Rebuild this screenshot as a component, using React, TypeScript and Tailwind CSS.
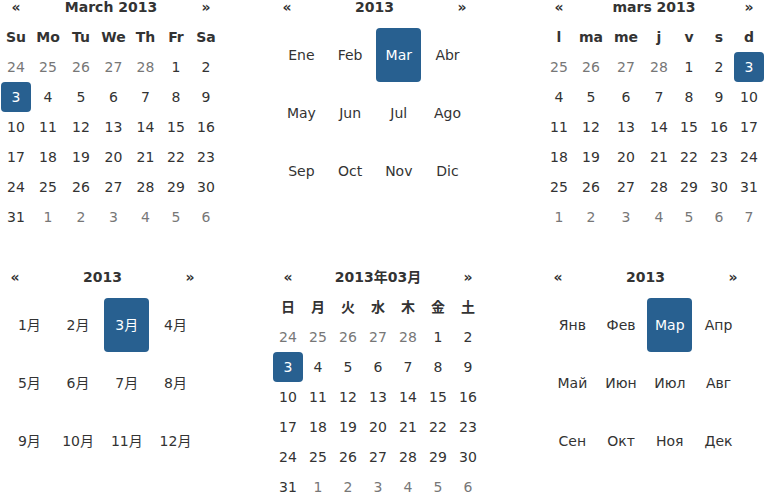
import React from 'react'

type Day = {
    n: number
    muted?: boolean
    active?: boolean
}

type DayViewProps = {
    title: string
    dow: string[]
    days: Day[]
    cols: string
}

type MonthViewProps = {
    months: string[]
    active: number
}

function buildDays(before: number[], count: number, after: number[], activeDay: number): Day[] {
    const out: Day[] = []
    before.forEach((n) => out.push({ n, muted: true }))
    for (let i = 1; i <= count; i++) out.push({ n: i, active: i === activeDay })
    after.forEach((n) => out.push({ n, muted: true }))
    return out
}

function DayView(props: DayViewProps) {
    return (
        <div className={`grid w-max auto-rows-[30px] ${props.cols}`}>
            <div className="flex items-center justify-center font-bold">«</div>
            <div className="col-span-5 flex items-center justify-center font-bold">{props.title}</div>
            <div className="flex items-center justify-center font-bold">»</div>
            {props.dow.map((d) => (
                <div key={d} className="flex items-center justify-center font-bold">
                    {d}
                </div>
            ))}
            {props.days.map((d, i) => (
                <div
                    key={i}
                    className={
                        'flex items-center justify-center rounded-[4px] ' +
                        (d.active ? 'bg-[#286090] text-white' : d.muted ? 'text-[#777]' : '')
                    }
                >
                    {d.n}
                </div>
            ))}
        </div>
    )
}

function MonthView(props: MonthViewProps) {
    return (
        <div className="w-[205px]">
            <div className="grid h-[30px] grid-cols-[30px_1fr_30px] font-bold">
                <div className="flex items-center justify-center">«</div>
                <div className="flex items-center justify-center">2013</div>
                <div className="flex items-center justify-center">»</div>
            </div>
            <div className="px-[5px] py-[4px]">
                <div className="flex flex-wrap">
                    {props.months.map((m, i) => (
                        <span
                            key={m}
                            className={
                                'm-[1%] block h-[54px] w-[23%] rounded-[4px] text-center leading-[54px] ' +
                                (i === props.active ? 'bg-[#286090] text-white' : '')
                            }
                        >
                            {m}
                        </span>
                    ))}
                </div>
            </div>
        </div>
    )
}

const enDays = buildDays([24, 25, 26, 27, 28], 31, [1, 2, 3, 4, 5, 6], 3)
const frDays = buildDays([25, 26, 27, 28], 31, [1, 2, 3, 4, 5, 6, 7], 3)

const esMonths = ['Ene', 'Feb', 'Mar', 'Abr', 'May', 'Jun', 'Jul', 'Ago', 'Sep', 'Oct', 'Nov', 'Dic']
const jaMonths = ['1月', '2月', '3月', '4月', '5月', '6月', '7月', '8月', '9月', '10月', '11月', '12月']
const ruMonths = ['Янв', 'Фев', 'Мар', 'Апр', 'Май', 'Июн', 'Июл', 'Авг', 'Сен', 'Окт', 'Ноя', 'Дек']

export default function App() {
    return (
        <div className="h-[492px] w-[764px] overflow-hidden bg-white font-['DejaVu_Sans','Noto_Sans_CJK_JP',sans-serif] text-[14px] text-[#333]">
            <div className="-mt-2 grid grid-cols-[272px_271px_221px] grid-rows-[270px_auto]">
                <div className="pl-px">
                    <DayView
                        title="March 2013"
                        dow={['Su', 'Mo', 'Tu', 'We', 'Th', 'Fr', 'Sa']}
                        days={enDays}
                        cols="grid-cols-[30px_34px_32px_33px_31px_30px_30px]"
                    />
                </div>
                <div>
                    <MonthView months={esMonths} active={2} />
                </div>
                <div className="pl-px">
                    <DayView
                        title="mars 2013"
                        dow={['l', 'ma', 'me', 'j', 'v', 's', 'd']}
                        days={frDays}
                        cols="grid-cols-[30px_34px_36px_30px_30px_30px_30px]"
                    />
                </div>
                <div>
                    <MonthView months={jaMonths} active={2} />
                </div>
                <div className="pl-px">
                    <DayView
                        title="2013年03月"
                        dow={['日', '月', '火', '水', '木', '金', '土']}
                        days={enDays}
                        cols="grid-cols-[30px_30px_30px_30px_30px_30px_30px]"
                    />
                </div>
                <div>
                    <MonthView months={ruMonths} active={2} />
                </div>
            </div>
        </div>
    )
}
